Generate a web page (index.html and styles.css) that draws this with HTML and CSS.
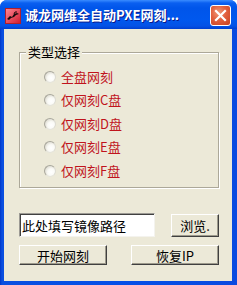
FILE: index.html
```html
<!DOCTYPE html>
<html lang="zh">
<head>
<meta charset="utf-8">
<title>诚龙网维全自动PXE网刻</title>
<link rel="stylesheet" href="styles.css">
</head>
<body>
<div class="window">
  <div class="titlebar">
    <svg class="app-icon" width="16" height="16" viewBox="0 0 16 16">
      <defs>
        <linearGradient id="ig" x1="0" y1="0" x2="1" y2="1">
          <stop offset="0" stop-color="#ff8a96"/>
          <stop offset="1" stop-color="#d0182c"/>
        </linearGradient>
      </defs>
      <rect x="0.5" y="0.5" width="15" height="15" fill="url(#ig)" stroke="#b0202c"/>
      <path d="M2 11 L5 8 L7 9 L9 6 L12 5 L14 6 L11 7 L9 9 L6 10 L4 12 Z" fill="#1a0a0a"/>
      <path d="M9 6 L10 4 L12 4" stroke="#1a0a0a" stroke-width="1" fill="none"/>
    </svg>
    <span class="title-text">诚龙网维全自动PXE网刻...</span>
    <div class="close-btn">
      <svg width="13" height="13" viewBox="0 0 13 13">
        <path d="M2 2 L11 11 M11 2 L2 11" stroke="#fff" stroke-width="2.2" stroke-linecap="square"/>
      </svg>
    </div>
  </div>
  <div class="client">
    <div class="group">
      <span class="group-title">类型选择</span>
      <div class="radio-row"><span class="radio"></span><span class="radio-label">全盘网刻</span></div>
      <div class="radio-row"><span class="radio"></span><span class="radio-label">仅网刻C盘</span></div>
      <div class="radio-row"><span class="radio"></span><span class="radio-label">仅网刻D盘</span></div>
      <div class="radio-row"><span class="radio"></span><span class="radio-label">仅网刻E盘</span></div>
      <div class="radio-row"><span class="radio"></span><span class="radio-label">仅网刻F盘</span></div>
    </div>
    <div class="path-row">
      <div class="textfield">此处填写镜像路径</div>
      <div class="btn btn-browse">浏览.</div>
    </div>
    <div class="action-row">
      <div class="btn btn-action">开始网刻</div>
      <div class="btn btn-action">恢复IP</div>
    </div>
  </div>
</div>
</body>
</html>
```
FILE: styles.css
```css
html, body {
  margin: 0;
  padding: 0;
  background: #ffffff;
}
body {
  width: 237px;
  height: 285px;
  overflow: hidden;
  font-family: "Noto Sans CJK SC", "DejaVu Sans", sans-serif;
  font-size: 12px;
}
.window {
  width: 237px;
  height: 285px;
  box-sizing: border-box;
  display: flex;
  flex-direction: column;
  background: linear-gradient(90deg, #0036c8 0, #0a4fe0 2px, #0550e8 50%, #0a4ae0 100%);
  border-radius: 7px 7px 0 0;
  overflow: hidden;
}
.titlebar {
  height: 29px;
  flex: none;
  display: flex;
  align-items: center;
  padding: 0 6px 0 5px;
  background: linear-gradient(180deg, #3a8cff 0, #0a5ff0 3px, #0055ea 8px, #0058ee 20px, #0452e6 26px, #003fd0 29px);
}
.app-icon {
  flex: none;
  margin-top: 2px;
}
.title-text {
  margin-left: 4px;
  color: #ffffff;
  font-weight: 700;
  font-size: 13px;
  text-shadow: 1px 1px 0 #0a1a8a;
  white-space: nowrap;
  flex: 1;
  line-height: 16px;
}
.close-btn {
  flex: none;
  width: 19px;
  height: 19px;
  border: 1px solid #ffffff;
  border-radius: 3px;
  margin-top: 2px;
  background: radial-gradient(circle at 40% 35%, #f09a7a 0, #e2603e 45%, #c8401e 100%);
  display: flex;
  align-items: center;
  justify-content: center;
}
.client {
  flex: 1;
  margin: 0 5px 4px 4px;
  background: #ece9d8;
  padding: 23px 0 0 15px;
  box-sizing: border-box;
}
.group {
  position: relative;
  width: 200px;
  height: 136px;
  box-sizing: border-box;
  border: 1px solid #aca899;
  box-shadow: inset 1px 1px 0 #ffffff, 1px 1px 0 #ffffff;
  padding: 12px 0 0 24px;
}
.group-title {
  position: absolute;
  top: -9px;
  left: 6px;
  padding: 0 2px;
  background: #ece9d8;
  color: #000000;
  line-height: 16px;
  font-size: 13px;
}
.radio-row {
  height: 23.5px;
  display: flex;
  align-items: center;
}
.radio {
  width: 12px;
  height: 12px;
  border-radius: 50%;
  box-sizing: border-box;
  border: 1px solid;
  border-color: #a8a79c #dcdbd2 #e6e5dc #a8a79c;
  background: radial-gradient(circle at 62% 62%, #ffffff 0, #fafaf6 40%, #dedcd2 75%, #b4b2a6 100%);
  flex: none;
}
.radio-label {
  margin-left: 5px;
  color: #c0141c;
  font-size: 13px;
  line-height: 16px;
}
.path-row {
  margin-top: 25px;
  width: 200px;
  display: flex;
  justify-content: space-between;
  align-items: center;
}
.textfield {
  width: 136px;
  height: 24px;
  box-sizing: border-box;
  background: #ffffff;
  border: 1px solid;
  border-color: #9c9a94 #f4f3ee #f4f3ee #9c9a94;
  box-shadow: inset 1px 1px 0 #404040;
  padding: 0 0 0 2px;
  display: flex;
  align-items: center;
  font-size: 13px;
  color: #000000;
  white-space: nowrap;
}
.btn {
  box-sizing: border-box;
  background: #ece9d8;
  border: 1px solid;
  border-color: #ffffff #404040 #404040 #ffffff;
  box-shadow: inset -1px -1px 0 #9d9a8c;
  display: flex;
  align-items: center;
  justify-content: center;
  color: #000000;
  font-size: 13px;
  white-space: nowrap;
}
.btn-browse {
  width: 48px;
  height: 23px;
}
.action-row {
  margin-top: 8px;
  width: 200px;
  display: flex;
  justify-content: space-between;
}
.btn-action {
  width: 88px;
  height: 20px;
}
```
